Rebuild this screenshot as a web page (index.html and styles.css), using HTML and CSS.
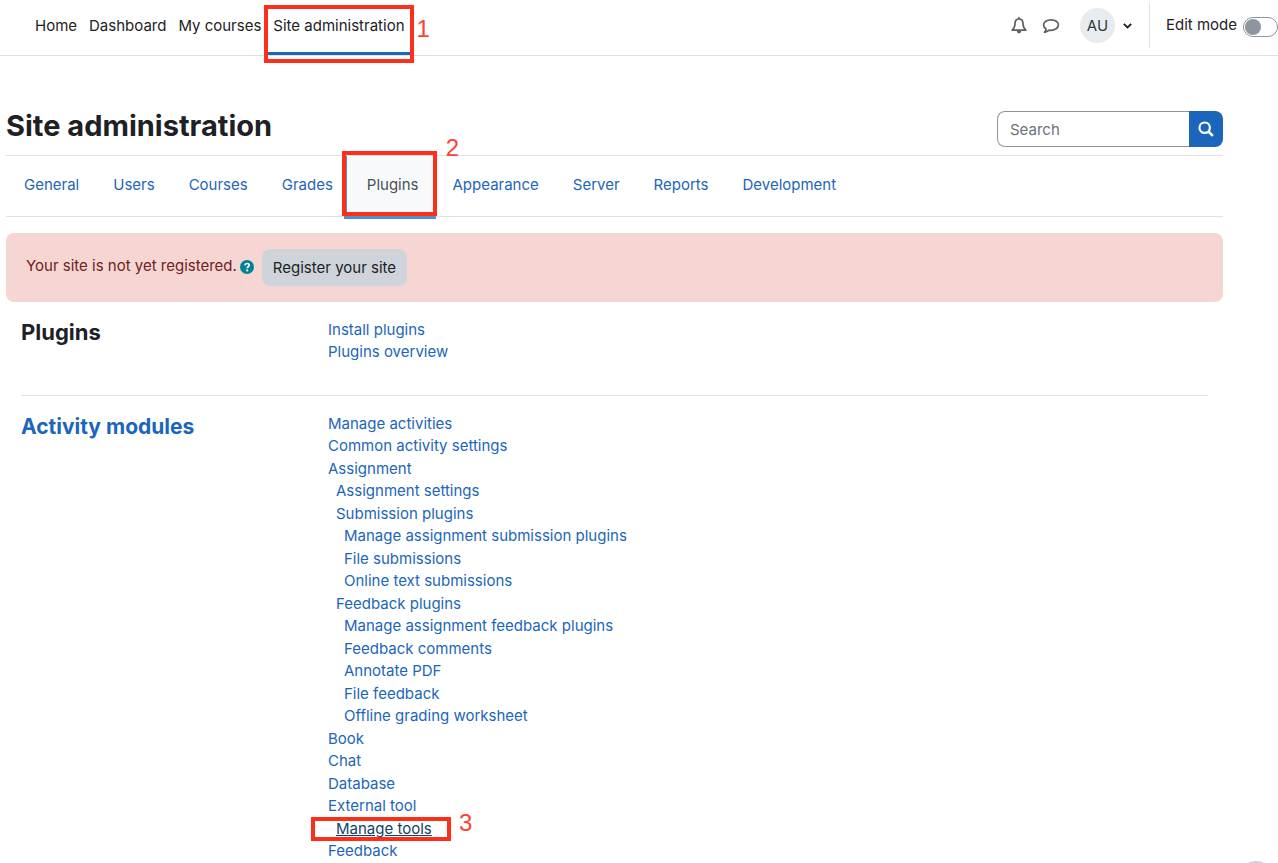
FILE: index.html
```html
<!DOCTYPE html>
<html lang="en">
<head>
<meta charset="utf-8">
<title>Site administration</title>
<link rel="stylesheet" href="styles.css">
</head>
<body>
<header class="navbar">
  <nav class="primary">
    <a href="#">Home</a>
    <a href="#">Dashboard</a>
    <a href="#">My courses</a>
    <a href="#" class="active">Site administration</a>
    <span class="mark mark-one"><b>1</b></span>
  </nav>
  <div class="tools">
    <button class="icon-btn" aria-label="Notifications">
      <svg width="16" height="17" viewBox="0 0 16 17" fill="none" stroke="#5f6062" stroke-width="1.7" stroke-linejoin="round"><path d="M8 2C5.300 2 4 4 4 6.500C4 10 3 11.500 1.200 13.200H14.800C13 11.500 12 10 12 6.500C12 4 10.700 2 8 2Z"/><path d="M8 .3V2" stroke-width="2"/><path d="M5.800 14H10.200A2.200 2.500 0 0 1 5.800 14Z" fill="#5f6062" stroke="none"/></svg>
    </button>
    <button class="icon-btn" aria-label="Messages">
      <svg width="18" height="16" viewBox="0 0 18 16" fill="none" stroke="#5f6062" stroke-width="1.7" stroke-linejoin="round"><path d="M9 1.800C4.800 1.800 1.600 4 1.600 7C1.600 8.700 2.600 10.100 4.100 11C4 12.400 3.300 13.400 2.500 14.300C4.500 14.100 6.100 13.200 7.200 12.200C12.500 12.900 16.400 10.300 16.400 7C16.400 4 13.200 1.800 9 1.800Z"/></svg>
    </button>
    <button class="user" aria-label="User menu">
      <span class="avatar">AU</span>
      <svg width="9" height="6" viewBox="0 0 9 6" fill="none" stroke="#1d2125" stroke-width="1.900"><path d="M.8.900L4.500 4.500L8.200.900"/></svg>
    </button>
    <div class="edit">
      <label for="edit">Edit mode</label>
      <input id="edit" type="checkbox" class="switch">
    </div>
  </div>
</header>
<main class="page">
  <div class="page-head">
    <h1>Site administration</h1>
    <form class="search">
      <input type="text" placeholder="Search" aria-label="Search">
      <button type="button" aria-label="Search">
        <svg width="16" height="16" viewBox="0 0 16 16" fill="none" stroke="#fff" stroke-width="2.200"><circle cx="6.700" cy="6.700" r="5.200"/><path d="M10.500 10.500L14.800 14.800" stroke-width="2.600"/></svg>
      </button>
    </form>
  </div>
  <nav class="tabs">
    <a href="#">General</a>
    <a href="#">Users</a>
    <a href="#">Courses</a>
    <a href="#">Grades</a>
    <a href="#" class="current">Plugins<span class="mark mark-two"><b>2</b></span></a>
    <a href="#">Appearance</a>
    <a href="#">Server</a>
    <a href="#">Reports</a>
    <a href="#">Development</a>
  </nav>
  <div class="alert">
    <span>Your site is not yet registered.</span>
    <button class="help" aria-label="Help">
      <svg width="14" height="14" viewBox="0 0 14 14"><circle cx="7" cy="7" r="7" fill="#008196"/><path d="M4.800 5.300C5 4 6 3.500 7 3.500C8.300 3.500 9.200 4.300 9.200 5.300C9.200 6.800 7.200 6.700 7.200 8.300" fill="none" stroke="#fff" stroke-width="1.700"/><circle cx="7.200" cy="10.400" r="1.100" fill="#fff"/></svg>
    </button>
    <button class="register">Register your site</button>
  </div>
  <section class="group">
    <h2>Plugins</h2>
    <ul>
      <li><a href="#">Install plugins</a></li>
      <li><a href="#">Plugins overview</a></li>
    </ul>
  </section>
  <hr>
  <section class="group">
    <h2><a href="#">Activity modules</a></h2>
    <ul>
      <li><a href="#">Manage activities</a></li>
      <li><a href="#">Common activity settings</a></li>
      <li><a href="#">Assignment</a>
        <ul>
          <li><a href="#">Assignment settings</a></li>
          <li><a href="#">Submission plugins</a>
            <ul>
              <li><a href="#">Manage assignment submission plugins</a></li>
              <li><a href="#">File submissions</a></li>
              <li><a href="#">Online text submissions</a></li>
            </ul>
          </li>
          <li><a href="#">Feedback plugins</a>
            <ul>
              <li><a href="#">Manage assignment feedback plugins</a></li>
              <li><a href="#">Feedback comments</a></li>
              <li><a href="#">Annotate PDF</a></li>
              <li><a href="#">File feedback</a></li>
              <li><a href="#">Offline grading worksheet</a></li>
            </ul>
          </li>
        </ul>
      </li>
      <li><a href="#">Book</a></li>
      <li><a href="#">Chat</a></li>
      <li><a href="#">Database</a></li>
      <li><a href="#">External tool</a>
        <ul>
          <li class="marked"><a href="#" class="hovered">Manage tools</a><span class="mark mark-three"><b>3</b></span></li>
        </ul>
      </li>
      <li><a href="#">Feedback</a></li>
    </ul>
  </section>
</main>
<button class="footer-btn" aria-label="Show footer"></button>
</body>
</html>
```
FILE: styles.css
```css
* { box-sizing: border-box; }
body {
  margin: 0;
  background: #fff;
  color: #1d2125;
  font: 15px/1.5 Inter, "Liberation Sans", sans-serif;
}
a { color: #1b66ba; text-decoration: none; }
button { border: 0; padding: 0; background: none; font: inherit; color: inherit; }
svg { display: block; }

.navbar {
  display: flex;
  justify-content: space-between;
  height: 56px;
  padding-left: 29px;
  border-bottom: 1px solid #dee2e6;
}
.primary { position: relative; display: flex; }
.primary a {
  display: flex;
  align-items: center;
  padding: 0 6px;
  border-bottom: 3px solid transparent;
  color: #1d2125;
}
.primary .active { border-bottom-color: #1b66ba; }
.tools { display: flex; align-items: center; height: 51px; }
.icon-btn { display: flex; width: 32px; justify-content: center; }
.user { display: flex; align-items: center; gap: 8px; margin: 0 17px 0 13px; }
.avatar {
  width: 35px;
  height: 35px;
  border-radius: 50%;
  background: #e9ecef;
  color: #343a40;
  line-height: 35px;
  text-align: center;
}
.edit {
  display: flex;
  align-items: center;
  gap: 6px;
  height: 45px;
  padding-left: 16px;
  border-left: 1px solid #dee2e6;
}
.switch {
  appearance: none;
  width: 35px;
  height: 20px;
  margin: 2px 0 0;
  padding: 1px;
  border: 1px solid #8f959e;
  border-radius: 10px;
}
.switch::before {
  content: "";
  display: block;
  width: 16px;
  height: 16px;
  border-radius: 50%;
  background: #8f959e;
}

.mark { position: absolute; border: 4px solid #fc301a; pointer-events: none; }
.mark b {
  position: absolute;
  color: #fc4135;
  font: 24px/24px "Liberation Sans", Arial, sans-serif;
}
.mark-one { inset: 5px -3px -8px auto; width: 150px; }
.mark-one b { left: 149px; top: 8px; }
.mark-two { inset: -5px -1px 0 -2px; }
.mark-two b { left: 100px; top: -19px; }
.mark-three { left: -25px; top: -1px; width: 140px; height: 24px; }
.mark-three b { left: 144px; top: -10px; }

.page { padding: 55px 55px 0 6px; }
.page-head {
  display: flex;
  justify-content: space-between;
  align-items: flex-start;
  height: 44px;
}
h1 { margin: 0; font-size: 29px; line-height: 30px; font-weight: 700; }
.search { display: flex; width: 226px; height: 36px; }
.search input {
  flex: 1;
  min-width: 0;
  padding: 2px 12px 0;
  border: 1px solid #8f959e;
  border-right: 0;
  border-radius: 8px 0 0 8px;
  font: inherit;
}
.search input::placeholder { color: #6a737b; opacity: 1; }
.search button {
  display: grid;
  place-items: center;
  width: 34px;
  border-radius: 0 8px 8px 0;
  background: #1b66ba;
}
.tabs {
  display: flex;
  height: 62px;
  padding-left: 1px;
  border: solid #dee2e6;
  border-width: 1px 0;
}
.tabs a { padding: 18px 17px; }
.tabs .current {
  position: relative;
  height: 63px;
  margin-left: -6px;
  padding-left: 23px;
  background: #f8f9fa;
  color: #495057;
  border-bottom: 3px solid #528fce;
  box-shadow: inset 3px 0 #528fce;
}
.alert {
  display: flex;
  align-items: flex-start;
  margin: 16px 0 17px;
  padding: 16px 20px;
  border-radius: 8px;
  background: #f6d6d3;
  color: #6e211e;
}
.alert > span { line-height: 34px; }
.help { margin: 11px 8px 0 3px; }
.register {
  padding: 8px 11px 6px;
  border-radius: 8px;
  background: #ced4da;
  color: #1d2125;
}
.group {
  display: grid;
  grid-template-columns: 307px 1fr;
  padding: 0 15px;
}
h2 { margin: 0; font-size: 22px; line-height: 26px; font-weight: 700; }
h2 a { font-size: 21px; }
ul { margin: 0; padding: 0; list-style: none; }
li ul { padding-left: 8px; }
.marked { position: relative; }
.hovered { color: #11416e; text-decoration: underline; }
hr { margin: 31px 15px 17px; border: 0; border-top: 1px solid #dee2e6; }
.footer-btn {
  position: fixed;
  right: 4px;
  bottom: -34px;
  width: 36px;
  height: 36px;
  border-radius: 50%;
  background: #ced4da;
}
```
